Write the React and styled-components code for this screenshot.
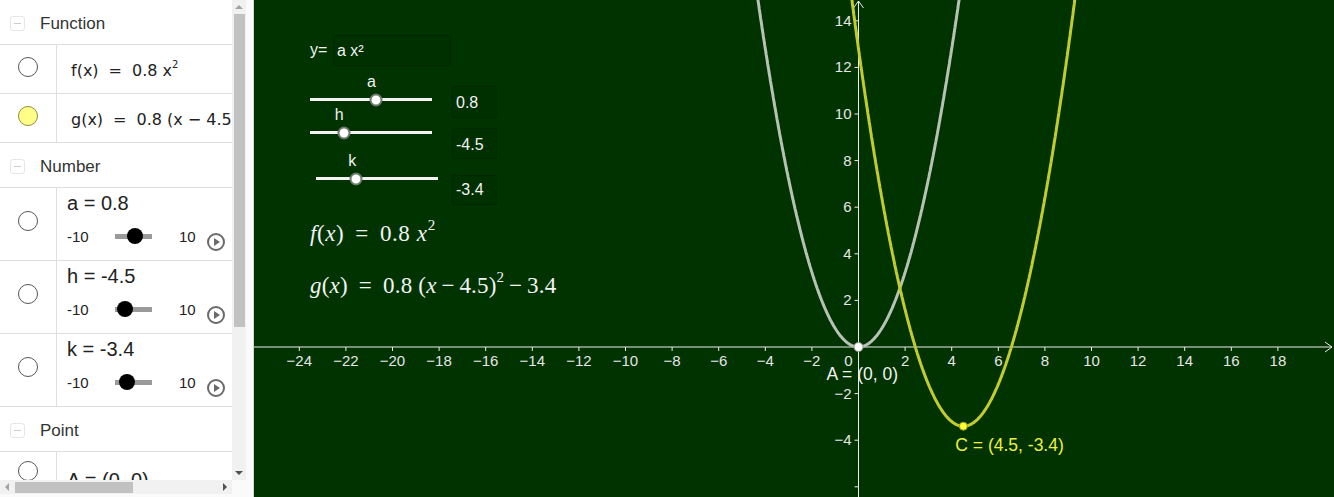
import React from "react";
import styled, { createGlobalStyle } from "styled-components";

const GlobalStyle = createGlobalStyle`
  html, body {
    margin: 0;
    padding: 0;
    height: 100%;
    overflow: hidden;
    background: #fff;
  }
  body {
    font-family: "Liberation Sans", Arial, sans-serif;
  }
  #root { height: 100%; }
`;

const Page = styled.div`
  display: flex;
  width: 1334px;
  height: 497px;
`;

/* ---------- algebra panel ---------- */

const Panel = styled.aside`
  flex: none;
  width: 253px;
  height: 100%;
  background: #fafafa;
  border-right: 1px solid #d6d6d6;
  display: grid;
  grid-template-columns: 232px 14px 1fr;
  grid-template-rows: 480px 14px 1fr;
`;

const List = styled.div`
  grid-column: 1;
  grid-row: 1;
  overflow: hidden;
  background: #fff;
  color: #333;
`;

const SectionHeader = styled.div`
  height: 45px;
  box-sizing: border-box;
  padding: 3px 0 0 10px;
  border-bottom: 1px solid #dedede;
  display: flex;
  align-items: center;
  gap: 15px;
  font-size: 17px;
  color: #333;
`;

const Collapse = styled.span`
  position: relative;
  width: 15px;
  height: 15px;
  box-sizing: border-box;
  border: 1px solid #e6e6e6;
  border-radius: 3px;
  &::after {
    content: "";
    position: absolute;
    left: 3px;
    right: 3px;
    top: 6px;
    height: 1px;
    background: #cdcdcd;
  }
`;

const Row = styled.div`
  display: flex;
  height: ${(p) => p.$h}px;
  border-bottom: 1px solid #dedede;
  flex: none;
`;

const Marble = styled.div`
  flex: none;
  width: 57px;
  box-sizing: border-box;
  border-right: 1px solid #dedede;
  display: flex;
  justify-content: center;
  padding-top: ${(p) => p.$top}px;
`;

const Dot = styled.span`
  width: 20px;
  height: 20px;
  box-sizing: border-box;
  border-radius: 50%;
  border: 1px solid ${(p) => (p.$fill ? "#8c8c3c" : "#555")};
  background: ${(p) => p.$fill || "#fff"};
`;

const FormulaCell = styled.div`
  flex: 1;
  padding: 16px 0 0 14px;
  white-space: nowrap;
  overflow: hidden;
  font-family: "DejaVu Sans", "Liberation Sans", sans-serif;
  font-size: 16px;
  color: #222;
  sup {
    font-size: 10px;
    vertical-align: 8px;
    line-height: 0;
  }
`;

const Op = styled.span`
  margin: 0 10px;
`;

const SliderCell = styled.div`
  flex: 1;
  display: flex;
  flex-direction: column;
  padding: 4px 0 0 10px;
  white-space: nowrap;
  overflow: hidden;
`;

const Title = styled.div`
  font-size: 20px;
  line-height: 23px;
  color: #222;
`;

const Controls = styled.div`
  display: flex;
  align-items: center;
  height: 24px;
  margin-top: 9px;
  font-size: 15px;
  color: #222;
`;

const Bound = styled.span`
  width: ${(p) => p.$w}px;
  margin-left: ${(p) => p.$ml || 0}px;
`;

const Track = styled.span`
  position: relative;
  width: 37px;
  height: 5px;
  margin-left: 26px;
  background: #9a9a9a;
`;

const Knob = styled.span`
  position: absolute;
  top: 50%;
  left: ${(p) => p.$pos * 100}%;
  width: 16px;
  height: 16px;
  border-radius: 50%;
  background: #000;
  transform: translate(-50%, -50%);
`;

const Play = styled.span`
  position: relative;
  width: 18px;
  height: 18px;
  box-sizing: border-box;
  margin: 12px 0 0 12px;
  border: 2px solid #6a6a6a;
  border-radius: 50%;
  &::after {
    content: "";
    position: absolute;
    left: 5px;
    top: 3px;
    border-left: 6px solid #6a6a6a;
    border-top: 4px solid transparent;
    border-bottom: 4px solid transparent;
  }
`;

const PointText = styled.div`
  flex: 1;
  padding: 17px 0 0 10px;
  font-size: 20px;
  color: #222;
  white-space: nowrap;
`;

/* scrollbars */
const VScroll = styled.div`
  grid-column: 2;
  grid-row: 1;
  background: #f1f1f1;
  display: flex;
  flex-direction: column;
  align-items: center;
`;

const HScroll = styled.div`
  grid-column: 1;
  grid-row: 2;
  background: #f1f1f1;
  display: flex;
  align-items: center;
`;

const ArrowBox = styled.span`
  flex: none;
  width: 14px;
  height: 14px;
  display: flex;
  align-items: center;
  justify-content: center;
  &::after {
    content: "";
    border: 4px solid transparent;
    ${(p) =>
      ({
        up: "border-bottom: 4px solid #a3a3a3; margin-top: -4px;",
        down: "border-top: 4px solid #505050; margin-top: 4px;",
        left: "border-right: 4px solid #a3a3a3; margin-left: -4px;",
        right: "border-left: 4px solid #505050; margin-left: 4px;",
      })[p.$dir]}
  }
`;

const VThumb = styled.span`
  width: 11px;
  height: 313px;
  background: #c1c1c1;
`;

const Spacer = styled.span`
  flex: 1;
`;

const HThumb = styled.span`
  height: 11px;
  width: 118px;
  margin-left: 1px;
  background: #c1c1c1;
`;

/* ---------- graphics view ---------- */

const Canvas = styled.main`
  position: relative;
  flex: 1;
  height: 100%;
  background: #003300;
  overflow: hidden;
  color: #fff;
  font-family: "Liberation Sans", Arial, sans-serif;
`;

const Plot = styled.svg`
  display: block;
  font-family: "Liberation Sans", Arial, sans-serif;
`;

const Widget = styled.div`
  position: absolute;
  left: ${(p) => p.$x}px;
  top: ${(p) => p.$y}px;
`;

const InputLabel = styled.span`
  position: absolute;
  left: -23px;
  top: 6px;
  font-size: 16px;
  color: #f2f2f2;
`;

const InputBox = styled.div`
  width: ${(p) => p.$w}px;
  height: ${(p) => p.$h}px;
  box-sizing: border-box;
  padding: ${(p) => p.$pt}px 0 0 3px;
  background: #002f00;
  border: 1px solid #002800;
  border-radius: 2px;
  font-size: 16px;
  color: #f2f2f2;
`;

const SliderLine = styled.div`
  position: relative;
  width: 122px;
  height: 3px;
  background: #f4f4f4;
`;

const SliderKnob = styled.span`
  position: absolute;
  top: 50%;
  left: ${(p) => p.$pos * 100}%;
  width: 9px;
  height: 9px;
  border-radius: 50%;
  background: #fff;
  border: 2px solid #6e7a6e;
  transform: translate(-50%, -50%);
`;

const SliderName = styled.span`
  position: absolute;
  left: ${(p) => p.$pos * 100}%;
  bottom: 10px;
  transform: translateX(-100%);
  font-size: 16px;
  color: #f2f2f2;
`;

const MathLine = styled.div`
  position: absolute;
  left: ${(p) => p.$x}px;
  top: ${(p) => p.$y}px;
  font-family: "Liberation Serif", "DejaVu Serif", serif;
  font-size: 23px;
  letter-spacing: ${(p) => p.$ls}px;
  color: #f4f4f4;
  white-space: nowrap;
  i { font-style: italic; }
  sup {
    font-size: 15px;
    vertical-align: 11px;
    line-height: 0;
  }
`;

const Eq = styled.span`
  margin: 0 11px;
`;

/* ---------- data ---------- */

const sliders = [
  { name: "a", value: 0.8, label: "a = 0.8", text: "0.8" },
  { name: "h", value: -4.5, label: "h = -4.5", text: "-4.5" },
  { name: "k", value: -3.4, label: "k = -3.4", text: "-3.4" },
];
const frac = (v) => (v + 10) / 20;

const canvasSliders = [
  { name: "a", x: 56, y: 98, box: { x: 198, y: 86, h: 32, pt: 7 } },
  { name: "h", x: 56, y: 131, box: { x: 198, y: 128, h: 31, pt: 7 } },
  { name: "k", x: 62, y: 177, box: { x: 198, y: 175, h: 30, pt: 5 } },
];

const W = 1080;
const H = 497;
const ox = 604.5;
const oy = 347;
const s = 23.3;
const px = (x) => ox + x * s;
const py = (y) => oy - y * s;

const curvePath = (fn, from, to) => {
  let d = "";
  for (let x = from; x <= to + 1e-9; x += 0.02) {
    d += `${d ? "L" : "M"}${px(x).toFixed(1)},${py(fn(x)).toFixed(1)}`;
  }
  return d;
};

const f = (x) => 0.8 * x * x;
const g = (x) => 0.8 * (x - 4.5) * (x - 4.5) - 3.4;

const xTicks = [];
for (let k = -24; k <= 18; k += 2) if (k !== 0) xTicks.push(k);
const yTicks = [];
for (let k = -6; k <= 14; k += 2) if (k !== 0) yTicks.push(k);
const yLabels = yTicks.filter((k) => k > -6);

const label = (n) => (n < 0 ? `\u2212${-n}` : `${n}`);

function Graph() {
  return (
    <Plot width={W} height={H} viewBox={`0 0 ${W} ${H}`}>
      <g stroke="#ececec" strokeWidth="1" fill="none">
        <line x1="0" y1={oy} x2={W - 2} y2={oy} />
        <polyline points={`${W - 9},${oy - 5} ${W - 2},${oy} ${W - 9},${oy + 5}`} />
        <line x1={ox} y1={H} x2={ox} y2="1" />
        <polyline points={`${ox - 5},8 ${ox},1 ${ox + 5},8`} />
        {xTicks.map((k) => (
          <line key={k} x1={px(k)} y1={oy} x2={px(k)} y2={oy + 4} />
        ))}
        {yTicks.map((k) => (
          <line key={k} x1={ox - 4} y1={py(k)} x2={ox} y2={py(k)} />
        ))}
      </g>
      <g fill="#e6e6e6" fontSize="15">
        {xTicks.map((k) => (
          <text key={k} x={px(k)} y={oy + 19} textAnchor="middle">
            {label(k)}
          </text>
        ))}
        {yLabels.map((k) => (
          <text key={k} x={ox - 7} y={py(k) + 5} textAnchor="end">
            {label(k)}
          </text>
        ))}
        <text x={ox - 6} y={oy + 19} textAnchor="end">0</text>
      </g>
      <path d={curvePath(f, -6, 6)} stroke="#b7c1b5" strokeWidth="3" fill="none" />
      <path d={curvePath(g, -2, 11)} stroke="#c3cc2c" strokeWidth="3" fill="none" />
      <circle cx={ox} cy={oy} r="4.5" fill="#fff" stroke="#8a948a" strokeWidth="1" />
      <circle cx={px(4.5)} cy={py(-3.4)} r="4" fill="#ffff33" stroke="#9a9a20" strokeWidth="1" />
      <text x={ox - 32} y={oy + 33} fill="#f2f2f2" fontSize="17.5">A = (0, 0)</text>
      <text x={px(4.5) - 8} y={py(-3.4) + 25} fill="#eef03c" fontSize="17.5">C = (4.5, -3.4)</text>
    </Plot>
  );
}

export default function App() {
  return (
    <>
      <GlobalStyle />
      <Page>
        <Panel>
          <List>
            <SectionHeader>
              <Collapse />
              Function
            </SectionHeader>
            <Row $h={48}>
              <Marble $top={12}>
                <Dot />
              </Marble>
              <FormulaCell>
                f(x)<Op>=</Op>0.8 x<sup>2</sup>
              </FormulaCell>
            </Row>
            <Row $h={48}>
              <Marble $top={12}>
                <Dot $fill="#ffff88" />
              </Marble>
              <FormulaCell>
                g(x)<Op>=</Op>0.8 (x − 4.5)<sup>2</sup> − 3.4
              </FormulaCell>
            </Row>
            <SectionHeader>
              <Collapse />
              Number
            </SectionHeader>
            {sliders.map((sl) => (
              <Row key={sl.name} $h={72}>
                <Marble $top={23}>
                  <Dot />
                </Marble>
                <SliderCell>
                  <Title>{sl.label}</Title>
                  <Controls>
                    <Bound $w={22}>-10</Bound>
                    <Track>
                      <Knob $pos={frac(sl.value)} />
                    </Track>
                    <Bound $w={16} $ml={27}>10</Bound>
                    <Play />
                  </Controls>
                </SliderCell>
              </Row>
            ))}
            <SectionHeader>
              <Collapse />
              Point
            </SectionHeader>
            <Row $h={60}>
              <Marble $top={9}>
                <Dot />
              </Marble>
              <PointText>A = (0, 0)</PointText>
            </Row>
          </List>
          <VScroll>
            <ArrowBox $dir="up" />
            <VThumb />
            <Spacer />
            <ArrowBox $dir="down" />
          </VScroll>
          <HScroll>
            <ArrowBox $dir="left" />
            <HThumb />
            <Spacer />
            <ArrowBox $dir="right" />
          </HScroll>
        </Panel>

        <Canvas>
          <Graph />
          <Widget $x={79} $y={35}>
            <InputLabel>y=</InputLabel>
            <InputBox $w={118} $h={31} $pt={6}>
              a x²
            </InputBox>
          </Widget>
          {canvasSliders.map((cs, i) => (
            <React.Fragment key={cs.name}>
              <Widget $x={cs.x} $y={cs.y}>
                <SliderLine>
                  <SliderName $pos={frac(sliders[i].value)}>{cs.name}</SliderName>
                  <SliderKnob $pos={frac(sliders[i].value)} />
                </SliderLine>
              </Widget>
              <Widget $x={cs.box.x} $y={cs.box.y}>
                <InputBox $w={45} $h={cs.box.h} $pt={cs.box.pt}>
                  {sliders[i].text}
                </InputBox>
              </Widget>
            </React.Fragment>
          ))}
          <MathLine $x={56} $y={221} $ls={0.6}>
            <i>f</i>(<i>x</i>)<Eq>=</Eq>0.8 <i>x</i>
            <sup>2</sup>
          </MathLine>
          <MathLine $x={56} $y={273} $ls={0.2}>
            <i>g</i>(<i>x</i>)<Eq>=</Eq>0.8 (<i>x</i>{"\u2009−\u2009"}4.5)<sup>2</sup>
            {"\u2009−\u2009"}3.4
          </MathLine>
        </Canvas>
      </Page>
    </>
  );
}
